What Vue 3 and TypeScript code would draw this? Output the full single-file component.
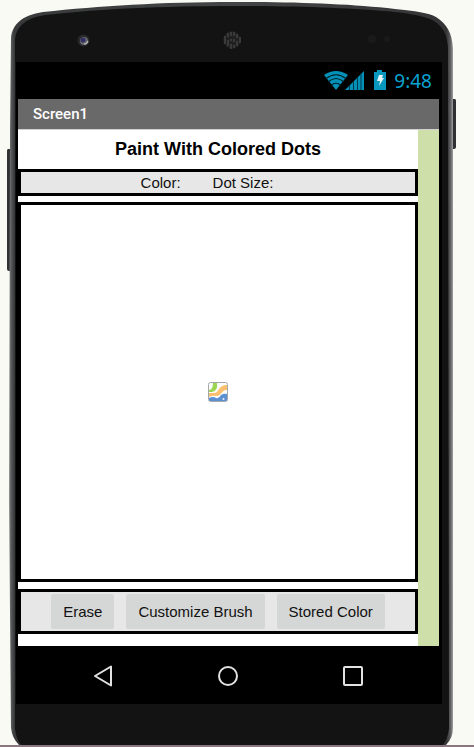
<script setup lang="ts">
import { ref } from 'vue'

const appTitle = ref<string>('Screen1')
const clock = ref<string>('9:48')
const actions: string[] = ['Erase', 'Customize Brush', 'Stored Color']
</script>

<template>
  <div class="page">
    <div class="phone">
      <svg class="frame" viewBox="0 0 474 745" preserveAspectRatio="none" aria-hidden="true">
        <defs>
          <linearGradient id="rim" x1="0" x2="1" y1="0" y2="0">
            <stop offset="0" stop-color="#9a9b9c" />
            <stop offset="0.004" stop-color="#5c5e60" />
            <stop offset="0.012" stop-color="#38393a" />
            <stop offset="0.5" stop-color="#434445" />
            <stop offset="0.985" stop-color="#343436" />
            <stop offset="0.994" stop-color="#5c5c5f" />
            <stop offset="1" stop-color="#a0a0a2" />
          </linearGradient>
        </defs>
        <path d="M13 149H8Q7 149 7 151V269Q7 271 9 271H13Z" fill="#303132" />
        <path d="M450 99H455Q456 99 456 101V147Q456 149 454 149H450Z" fill="#303033" />
        <path
          d="M10 130L11 38C12 25 22 15 43 12C100 6 160 2 234 2C300 2 350 4 395 9C415 11 429 13 436 17C447 24 452 33 453 48L453 728Q453 738 446 745H19Q12 738 11 728L9 500Z"
          fill="url(#rim)"
        />
        <path
          d="M15 130L15 40C16 27 25 18 45 15C100 9 160 6 234 6C300 6 350 8 395 12C414 14 427 17 434 21C443 27 447 34 448 48L449 728Q448 738 443 745H21Q16 739 15 728Z"
          fill="#131313"
        />
        <g>
          <circle cx="83.500" cy="40.500" r="6" fill="#29292b" />
          <circle cx="84" cy="41" r="4" fill="#67676e" />
          <circle cx="83" cy="40" r="2.500" fill="#303064" />
          <path d="M84 44Q87 44 88 41" stroke="#b7b7b7" stroke-width="1.200" fill="none" />
        </g>
        <circle cx="232" cy="40" r="9" fill="#202020" />
        <path
          d="M225 36V44M228 33V37M228 40V46M231 32V36M231 39V41M231 44V49M234 32V36M234 39V42M234 45V48M237 34V38M237 41V46M240 37V43"
          stroke="#555" stroke-width="1"
        />
        <circle cx="372" cy="39" r="4" fill="#1a1a1a" />
        <circle cx="387" cy="39" r="3" fill="#1a1a1a" />
      </svg>

      <main class="display">
        <header class="status">
          <svg class="signals" viewBox="0 0 64 22" aria-hidden="true">
            <path d="M0 5Q12 -3 24 5L12 20Z" fill="#0391b8" />
            <path d="M2 8.500Q12 1 22 8.500M4 12Q12 5 20 12M7 15.500Q12 11 17 15.500" fill="none" stroke="#001d27" stroke-width="1.100" />
            <path d="M21 20L40 1V20Z" fill="#0391b8" />
            <path d="M25.500 15V20M29.500 11V20M33.500 7V20M37 3V20" stroke="#00384a" stroke-width="1" />
            <path d="M50 2H53V0H58V2H62V20H50Z" fill="#0797bf" />
            <path d="M55 5H59L58 8H60L55 16L56 11H53Z" fill="#e4f6fb" />
          </svg>
          <time>{{ clock }}</time>
        </header>

        <div class="app">
          <h1 class="titlebar">{{ appTitle }}</h1>
          <div class="workspace">
            <div class="form">
              <h2 class="heading">Paint With Colored Dots</h2>
              <div class="info">
                <span>Color:</span>
                <span>Dot Size:</span>
              </div>
              <div class="canvas">
                <svg viewBox="0 0 20 20" role="img" aria-label="Canvas image">
                  <rect x="1" y="1" width="18" height="18" rx="1" fill="#fbfcfc" />
                  <path d="M5 1H9Q10 9 4 10H1V8Q5 8 5 1Z" fill="#9bd653" />
                  <path d="M19 3V8C14 7 14 14 8 14Q4 13 1 15V11H6C11 11 10 3 19 3Z" fill="#fbc06f" />
                  <path d="M1 16Q5 14 8 16Q11 17 13 13Q16 11 19 12V19H1Z" fill="#5b91d0" />
                  <circle cx="15.500" cy="17" r="1" fill="#e8f2ff" />
                  <rect x="0.500" y="0.500" width="19" height="19" rx="2" fill="none" stroke="#a4a7aa" />
                </svg>
              </div>
              <div class="actions">
                <button v-for="label in actions" :key="label" type="button">{{ label }}</button>
              </div>
            </div>
          </div>
        </div>

        <nav class="navigation" aria-label="System">
          <button type="button" aria-label="Back">
            <svg viewBox="0 0 24 24"><path d="M20 2.500V21.500L4 12Z" /></svg>
          </button>
          <button type="button" aria-label="Home">
            <svg viewBox="0 0 24 24"><circle cx="12" cy="12" r="9" /></svg>
          </button>
          <button type="button" aria-label="Recent apps">
            <svg viewBox="0 0 24 24"><rect x="3" y="3" width="18" height="18" rx="1" /></svg>
          </button>
        </nav>
      </main>
    </div>
  </div>
</template>

<style>
body {
  margin: 0;
  background: #f9faf4;
}
</style>

<style scoped>
.page {
  border-bottom: 2px solid #8b777f;
  font-family: "Liberation Sans", Arial, sans-serif;
}

.phone {
  position: relative;
  padding: 62px 32px 41px 16px;
}

.frame {
  position: absolute;
  inset: 0;
  width: 100%;
  height: 100%;
}

.display {
  position: relative;
  background: #000;
}

.status {
  display: flex;
  align-items: center;
  justify-content: flex-end;
  gap: 6px;
  height: 37px;
  padding-right: 10px;
  color: #0aa3d0;
  font-family: "Noto Sans", sans-serif;
  font-size: 19px;
}

.signals {
  width: 64px;
  height: 22px;
}

.app {
  margin: 0 3px 0 2px;
}

.titlebar {
  margin: 0;
  padding-left: 15px;
  background: #696969;
  border-bottom: 1px solid #d0d0d0;
  color: #fff;
  font-family: Roboto, sans-serif;
  font-size: 15px;
  font-weight: 500;
  line-height: 30px;
}

.workspace {
  padding-right: 21px;
  background: #cedfa9;
}

.form {
  padding-bottom: 12px;
  background: #fff;
}

.heading {
  margin: 0;
  color: #000;
  font-size: 18px;
  font-weight: 700;
  line-height: 39px;
  text-align: center;
}

.info,
.canvas,
.actions {
  display: flex;
  align-items: center;
  justify-content: center;
  border: 3px solid #000;
}

.info {
  gap: 32px;
  padding-right: 22px;
  background: #e7e7e7;
  color: #111;
  font-size: 15px;
  line-height: 21px;
}

.canvas {
  min-height: 374px;
  margin: 6px 0 7px;
  background: #fff;
}

.canvas svg {
  width: 20px;
  height: 20px;
}

.actions {
  gap: 12px;
  padding: 2px 0;
  background: #e7e7e7;
}

.actions button {
  height: 35px;
  padding: 0 12px;
  border: 0;
  border-radius: 2px;
  background: #d5d7d6;
  color: #111;
  font-family: inherit;
  font-size: 15px;
}

.navigation {
  display: flex;
  align-items: center;
  justify-content: space-between;
  box-sizing: border-box;
  height: 58px;
  padding: 2px 77px 0 75px;
}

.navigation button {
  display: flex;
  padding: 0;
  border: 0;
  background: none;
}

.navigation svg {
  width: 24px;
  height: 24px;
  fill: none;
  stroke: #e2e2e2;
  stroke-width: 2;
  stroke-linejoin: round;
}
</style>
